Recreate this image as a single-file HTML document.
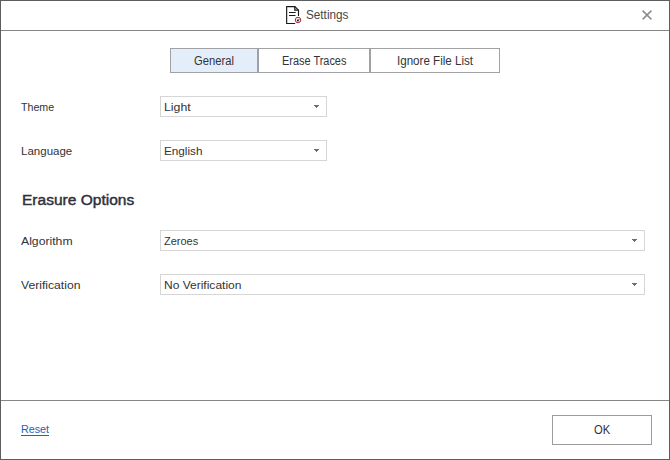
<!DOCTYPE html>
<html>
<head>
<meta charset="utf-8">
<title>Settings</title>
<style>
  html, body { margin: 0; padding: 0; }
  body {
    width: 670px; height: 460px; overflow: hidden; background: #ffffff;
    font-family: "Liberation Sans", sans-serif; font-size: 11.5px; color: #2a2a2a;
    position: relative;
  }
  .abs { position: absolute; box-sizing: border-box; }
  #win { left: 0; top: 0; width: 670px; height: 460px; border: 1px solid #5e5e5e; background: #fff; }
  #titleline { left: 1px; top: 30px; width: 668px; height: 1px; background: #858585; }
  #ticon { left: 284px; top: 4px; width: 18px; height: 22px; }
  #close { left: 641px; top: 9px; width: 12px; height: 12px; }
  .tab { top: 48px; height: 25px; border: 1px solid #a0a1a3; background: #fff; }
  #tab1 { left: 170px; width: 88px; background: #e3eefa; }
  #tab2 { left: 258px; width: 112px; }
  #tab3 { left: 370px; width: 130px; }
  .combo { left: 160px; height: 21px; border: 1px solid #d6d6d6; background: #fff; }
  .short { width: 167px; }
  .long { width: 485px; }
  .arrow { width: 5px; height: 3px; }
  #botline { left: 1px; top: 400px; width: 668px; height: 1px; background: #868686; }
  #ok { left: 552px; top: 415px; width: 100px; height: 30px; border: 1px solid #9c9c9c; background: #fff; }
  .t { position: absolute; display: block; white-space: nowrap; line-height: 14px; height: 14px; font-size: 11.5px; color: #333336; transform-origin: 0 0; }
  .t.title { color: #444444; }
  .t.h { font-size: 14px; font-weight: normal; -webkit-text-stroke: 0.42px #30303a; line-height: 16px; height: 16px; color: #30303a; }
  .t.link { color: #2463b4; }
  #resetline { left: 21px; top: 435px; width: 28px; height: 1px; background: #2463b4; }
</style>
</head>
<body>
<div id="win" class="abs"></div>
<div id="titleline" class="abs"></div>

<svg id="ticon" class="abs" viewBox="0 0 18 22">
  <path d="M11.2 19.45 H2.65 V2.6 H10.9 L14.5 6.2 V12" fill="none" stroke="#1a1a1a" stroke-width="1.15" stroke-linejoin="miter"/>
  <path d="M10.8 2.6 V6.1 H14.5" fill="none" stroke="#1a1a1a" stroke-width="1.25"/>
  <path d="M5 8.5 H11.7 M5 11.5 H11.5" stroke="#1a1a1a" stroke-width="1.1"/>
  <circle cx="14" cy="16" r="2.75" fill="#f4f0f0" stroke="#a8222b" stroke-width="0.95"/>
  <circle cx="13.9" cy="16.5" r="1" fill="#1a1a1a"/>
  <path d="M14 16.5 L15.6 14.9" stroke="#3a3a3a" stroke-width="0.8" fill="none"/>
</svg>

<svg id="close" class="abs" viewBox="0 0 12 12">
  <path d="M1.6 1.6 L10.4 10.4 M10.4 1.6 L1.6 10.4" stroke="#8c8c8c" stroke-width="1.5" fill="none"/>
</svg>

<div id="tab1" class="abs tab"></div>
<div id="tab2" class="abs tab"></div>
<div id="tab3" class="abs tab"></div>

<div id="c1" class="abs combo short" style="top:96px"></div>
<div id="c2" class="abs combo short" style="top:140px"></div>
<div id="c3" class="abs combo long" style="top:230px"></div>
<div id="c4" class="abs combo long" style="top:274px"></div>

<svg class="abs arrow" style="left:314px;top:105px" viewBox="0 0 5 3" shape-rendering="crispEdges"><path d="M0 0h5v1h-5z M1 1h3v1h-3z M2 2h1v1h-1z" fill="#6e6e6e"/></svg>
<svg class="abs arrow" style="left:314px;top:149px" viewBox="0 0 5 3" shape-rendering="crispEdges"><path d="M0 0h5v1h-5z M1 1h3v1h-3z M2 2h1v1h-1z" fill="#6e6e6e"/></svg>
<svg class="abs arrow" style="left:632px;top:239px" viewBox="0 0 5 3" shape-rendering="crispEdges"><path d="M0 0h5v1h-5z M1 1h3v1h-3z M2 2h1v1h-1z" fill="#6e6e6e"/></svg>
<svg class="abs arrow" style="left:632px;top:283px" viewBox="0 0 5 3" shape-rendering="crispEdges"><path d="M0 0h5v1h-5z M1 1h3v1h-3z M2 2h1v1h-1z" fill="#6e6e6e"/></svg>

<div id="botline" class="abs"></div>
<div id="ok" class="abs"></div>
<div id="resetline" class="abs"></div>

<span id="t_title" class="t title" style="font-size:12px;left:306.2px;top:8px;transform:scaleX(0.978)">Settings</span>
<span id="t_tab1" class="t " style="font-size:12.3px;left:193.8px;top:54px;transform:scaleX(0.912)">General</span>
<span id="t_tab2" class="t " style="font-size:12.3px;left:281.9px;top:54px;transform:scaleX(0.889)">Erase Traces</span>
<span id="t_tab3" class="t " style="font-size:12.3px;left:396.9px;top:54px;transform:scaleX(0.942)">Ignore File List</span>
<span id="t_l1" class="t " style="left:20.6px;top:100px;transform:scaleX(0.926)">Theme</span>
<span id="t_v1" class="t " style="left:164.3px;top:100px;transform:scaleX(1.068)">Light</span>
<span id="t_l2" class="t " style="left:21.3px;top:144px;transform:scaleX(1.002)">Language</span>
<span id="t_v2" class="t " style="left:163.8px;top:144px;transform:scaleX(1.02)">English</span>
<span id="t_h" class="t h" style="left:21.5px;top:192px;transform:scaleX(1.109)">Erasure Options</span>
<span id="t_l3" class="t " style="left:20.9px;top:234px;transform:scaleX(1.062)">Algorithm</span>
<span id="t_v3" class="t " style="left:164.4px;top:234px;transform:scaleX(0.956)">Zeroes</span>
<span id="t_l4" class="t " style="left:21.3px;top:278px;transform:scaleX(1.057)">Verification</span>
<span id="t_v4" class="t " style="left:163.5px;top:278px;transform:scaleX(1.044)">No Verification</span>
<span id="t_reset" class="t link" style="left:20.9px;top:422px;transform:scaleX(0.935)">Reset</span>
<span id="t_ok" class="t " style="font-size:12.8px;left:594.2px;top:423px;transform:scaleX(0.877)">OK</span>

</body>
</html>
